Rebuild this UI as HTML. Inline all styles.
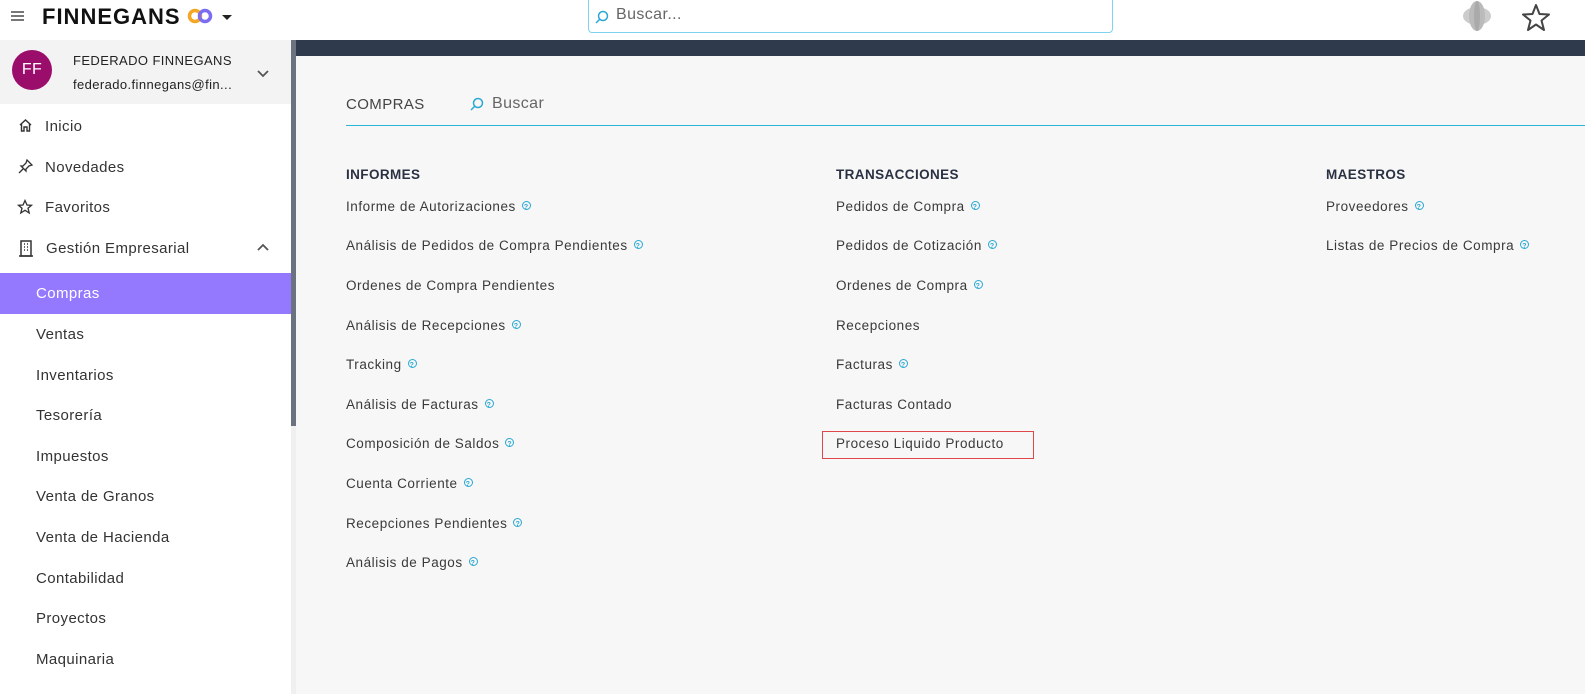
<!DOCTYPE html>
<html><head><meta charset="utf-8"><style>
*{margin:0;padding:0;box-sizing:border-box}
body{width:1585px;height:694px;overflow:hidden;background:#f7f7f7;font-family:"Liberation Sans",sans-serif;color:#333;position:relative;letter-spacing:0.4px}
.abs{position:absolute}
.top{left:0;top:0;width:1585px;height:40px;background:#fff}
.side{left:0;top:40px;width:291px;height:654px;background:#fff}
.scroll{left:291px;top:40px;width:5px;height:386px;background:#6b7280}
.scrolltrack{left:291px;top:40px;width:5px;height:654px;background:#f0f0f0}
.bar{left:296px;top:40px;width:1289px;height:16px;background:#2f3a4d}
.mi{position:absolute;left:45px;font-size:15px;color:#333;line-height:20px}
.si{position:absolute;left:36px;font-size:15px;color:#333;line-height:20px}
.it{position:absolute;font-size:13.5px;color:#3a3a3a;line-height:18px;white-space:nowrap;letter-spacing:0.55px}
.h{position:absolute;font-size:13.5px;font-weight:bold;color:#2a3142;line-height:18px}
.q{display:inline-block;width:9px;height:9px;border:1.2px solid #29a8d4;border-radius:50%;margin-left:6px;vertical-align:1px;position:relative}
.q:after{content:"?";position:absolute;left:1px;top:-3px;font-size:7px;color:#29a8d4;font-weight:bold;letter-spacing:0}
</style></head><body>
<div class="abs top"></div>
<div class="abs" style="left:11px;top:11px;width:13px;height:1.5px;background:#777;box-shadow:0 4px 0 #777,0 8px 0 #777"></div>
<div class="abs" style="left:42px;top:4px;font-size:22px;font-weight:bold;color:#111;letter-spacing:1px">FINNEGANS</div>
<svg class="abs" style="left:187px;top:8px" width="26" height="16"><circle cx="8" cy="8" r="5.5" fill="none" stroke="#f5a623" stroke-width="3.5"/><circle cx="18" cy="8" r="5.5" fill="none" stroke="#7b6cf0" stroke-width="3.5"/></svg>
<div class="abs" style="left:222px;top:15px;border-left:5px solid transparent;border-right:5px solid transparent;border-top:5px solid #222"></div>
<div class="abs" style="left:588px;top:0;width:525px;height:33px;border:1px solid #7dd3f0;border-top:none;border-radius:0 0 4px 4px;background:#fff"></div>
<svg class="abs" style="left:595px;top:10px" width="14" height="14"><circle cx="8" cy="6" r="4.5" fill="none" stroke="#29a8d4" stroke-width="1.5"/><line x1="5" y1="9" x2="1" y2="13" stroke="#29a8d4" stroke-width="1.5"/></svg>
<div class="abs" style="left:616px;top:6px;font-size:16px;color:#666">Buscar...</div>
<svg class="abs" style="left:1460px;top:0" width="34" height="34"><ellipse cx="17" cy="16" rx="14" ry="9" fill="#ccc"/><ellipse cx="17" cy="16" rx="8" ry="15" fill="#bbb"/><ellipse cx="17" cy="16" rx="3" ry="15" fill="#aaa"/></svg>
<svg class="abs" style="left:1520px;top:2px" width="32" height="30"><path d="M16 3 L19.5 12 L29 12.5 L21.5 18.5 L24 28 L16 22.5 L8 28 L10.5 18.5 L3 12.5 L12.5 12 Z" fill="none" stroke="#444" stroke-width="2" stroke-linejoin="round"/></svg>
<div class="abs scrolltrack"></div>
<div class="abs side"></div>
<div class="abs scroll"></div>
<div class="abs bar"></div>
<div class="abs" style="left:0;top:40px;width:291px;height:64px;background:#f3f3f3"></div>
<div class="abs" style="left:12px;top:50px;width:40px;height:40px;border-radius:50%;background:#9b0d6b;color:#fff;font-size:16px;text-align:center;line-height:40px">FF</div>
<div class="abs" style="left:73px;top:53px;font-size:13px;color:#222">FEDERADO FINNEGANS</div>
<div class="abs" style="left:73px;top:77px;font-size:13px;color:#222">federado.finnegans@fin...</div>
<svg class="abs" style="left:257px;top:70px" width="12" height="8"><path d="M1 1 L6 6 L11 1" fill="none" stroke="#555" stroke-width="1.8"/></svg>
<svg class="abs" style="left:18px;top:118px" width="15" height="15"><path d="M2 7 L7.5 2 L13 7 M3.5 6 V13 H6 V9 H9 V13 H11.5 V6" fill="none" stroke="#333" stroke-width="1.4"/></svg>
<div class="mi" style="top:117px">Inicio</div>
<svg class="abs" style="left:18px;top:159px" width="15" height="15"><path d="M9 1 L14 6 L11 7 L8 10 L8 12 L3 7 L5 7 L8 4 Z M5 10 L1 14" fill="none" stroke="#333" stroke-width="1.3"/></svg>
<div class="mi" style="top:158px">Novedades</div>
<svg class="abs" style="left:17px;top:199px" width="16" height="16"><path d="M8 1.5 L10 6 L14.5 6.3 L11 9.2 L12.2 14 L8 11.3 L3.8 14 L5 9.2 L1.5 6.3 L6 6 Z" fill="none" stroke="#333" stroke-width="1.3"/></svg>
<div class="mi" style="top:198px">Favoritos</div>
<svg class="abs" style="left:19px;top:240px" width="14" height="17"><rect x="2" y="1" width="10" height="15" fill="none" stroke="#333" stroke-width="1.5"/><path d="M5 4h1M8 4h1M5 7h1M8 7h1M5 10h1M8 10h1" stroke="#333" stroke-width="1.4"/><path d="M0 16h14" stroke="#333" stroke-width="1.5"/></svg>
<div class="mi" style="top:239px;left:46px">Gestión Empresarial</div>
<svg class="abs" style="left:257px;top:243px" width="12" height="8"><path d="M1 7 L6 2 L11 7" fill="none" stroke="#555" stroke-width="1.8"/></svg>
<div class="abs" style="left:0;top:273px;width:291px;height:41px;background:#9479ff"></div>
<div class="si" style="top:284px;color:#fff">Compras</div>
<div class="si" style="top:325px">Ventas</div>
<div class="si" style="top:366px">Inventarios</div>
<div class="si" style="top:406px">Tesorería</div>
<div class="si" style="top:447px">Impuestos</div>
<div class="si" style="top:487px">Venta de Granos</div>
<div class="si" style="top:528px">Venta de Hacienda</div>
<div class="si" style="top:569px">Contabilidad</div>
<div class="si" style="top:609px">Proyectos</div>
<div class="si" style="top:650px">Maquinaria</div>

<div class="abs" style="left:346px;top:96px;font-size:15px;color:#444">COMPRAS</div>
<svg class="abs" style="left:470px;top:97px" width="14" height="14"><circle cx="8" cy="6" r="4.5" fill="none" stroke="#29a8d4" stroke-width="1.5"/><line x1="5" y1="9" x2="1" y2="13" stroke="#29a8d4" stroke-width="1.5"/></svg>
<div class="abs" style="left:492px;top:95px;font-size:16px;color:#666">Buscar</div>
<div class="abs" style="left:346px;top:125px;width:1239px;height:1px;background:#29b6d8"></div>

<div class="h" style="left:346px;top:166px">INFORMES</div>
<div class="it" style="left:346px;top:198px">Informe de Autorizaciones<span class="q"></span></div>
<div class="it" style="left:346px;top:237px">Análisis de Pedidos de Compra Pendientes<span class="q"></span></div>
<div class="it" style="left:346px;top:277px">Ordenes de Compra Pendientes</div>
<div class="it" style="left:346px;top:317px">Análisis de Recepciones<span class="q"></span></div>
<div class="it" style="left:346px;top:356px">Tracking<span class="q"></span></div>
<div class="it" style="left:346px;top:396px">Análisis de Facturas<span class="q"></span></div>
<div class="it" style="left:346px;top:435px">Composición de Saldos<span class="q"></span></div>
<div class="it" style="left:346px;top:475px">Cuenta Corriente<span class="q"></span></div>
<div class="it" style="left:346px;top:515px">Recepciones Pendientes<span class="q"></span></div>
<div class="it" style="left:346px;top:554px">Análisis de Pagos<span class="q"></span></div>

<div class="h" style="left:836px;top:166px">TRANSACCIONES</div>
<div class="it" style="left:836px;top:198px">Pedidos de Compra<span class="q"></span></div>
<div class="it" style="left:836px;top:237px">Pedidos de Cotización<span class="q"></span></div>
<div class="it" style="left:836px;top:277px">Ordenes de Compra<span class="q"></span></div>
<div class="it" style="left:836px;top:317px">Recepciones</div>
<div class="it" style="left:836px;top:356px">Facturas<span class="q"></span></div>
<div class="it" style="left:836px;top:396px">Facturas Contado</div>
<div class="it" style="left:836px;top:435px">Proceso Liquido Producto</div>
<div class="abs" style="left:822px;top:431px;width:212px;height:28px;border:1.5px solid #e0474c"></div>

<div class="h" style="left:1326px;top:166px">MAESTROS</div>
<div class="it" style="left:1326px;top:198px">Proveedores<span class="q"></span></div>
<div class="it" style="left:1326px;top:237px">Listas de Precios de Compra<span class="q"></span></div>
</body></html>
